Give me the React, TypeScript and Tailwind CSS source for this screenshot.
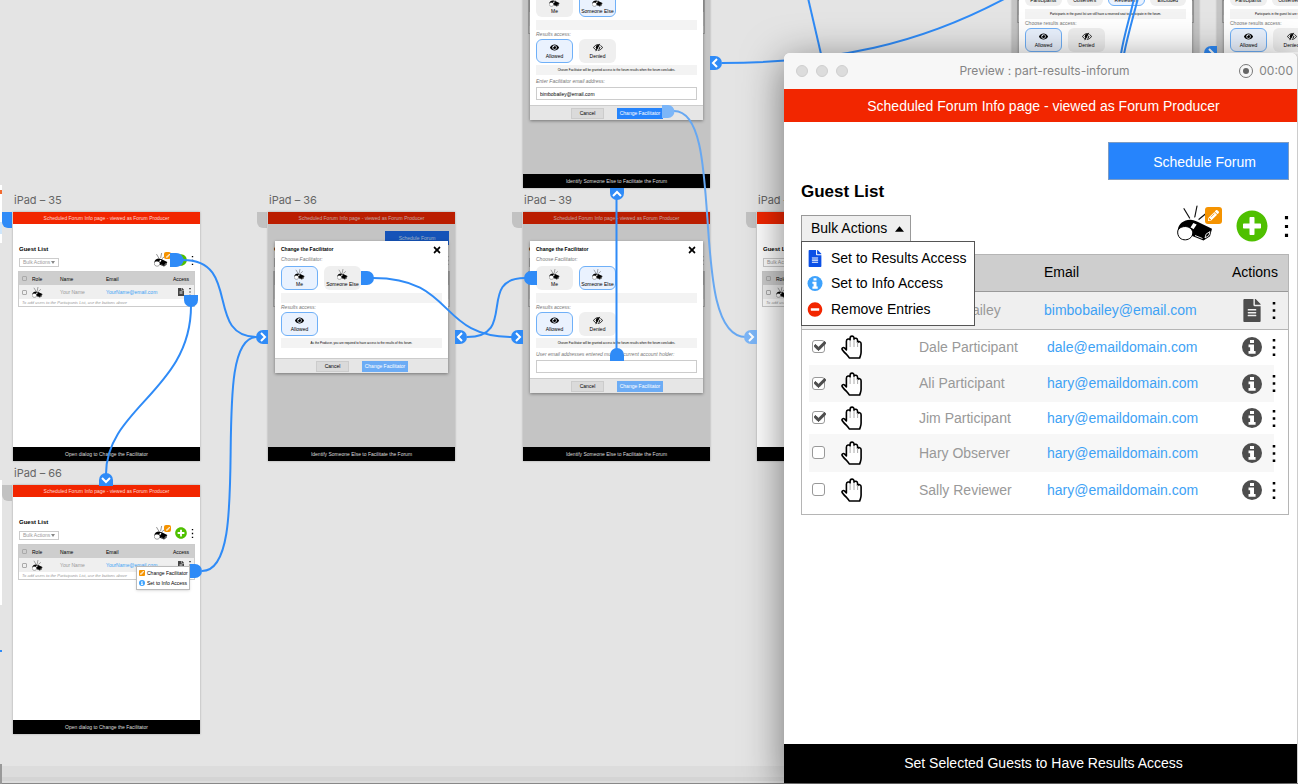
import React, { useState } from "react";
import {
  FaCheck,
  FaEye,
  FaFileAlt,
  FaMinusCircle,
  FaPencilAlt,
  FaPlusCircle,
  FaTimes,
} from "react-icons/fa";

/* ---------- Icons ---------- */

function Whistle({ className }: { className: string }) {
  return (
    <svg viewBox="0 0 37 37" className={className} fill="none" aria-hidden="true">
      <path
        d="M7 3.700 12.600 13M20 1l-2.200 11M28.700 8.700 22 14.300"
        stroke="#111"
        strokeWidth="1.200"
        strokeLinecap="round"
      />
      <path d="M.8 25C1.500 18.500 8 14 15 15c2 .3 4 1.200 5.500 1.800L35 23.800l-2 7.400L26.500 35.500 14 30.500Z" fill="#000" />
      <path
        d="M1 25c2-3.500 8.500-4.800 12.300-1.800 3 2.400 3.200 6.500.6 9.200-2.800 3-8 3.200-10.800.7C.8 31 .2 27.600 1 25Z"
        fill="#fff"
        stroke="#000"
        strokeWidth="1"
      />
      <path d="m16.300 18 3.400 1.400-3.200 4.800c-.8-.8-1.900-1.400-3-1.800Z" fill="#fff" />
      <path d="m18 30.500 7.500 3M28 33l4-2.600.9-3.800-3.900 2.600Z" stroke="#fff" strokeWidth=".9" />
    </svg>
  );
}

function Hand() {
  return (
    <svg viewBox="0 0 22 24" className="h-6 w-[22px]" fill="none" aria-hidden="true">
      <path
        d="M5.400 15V6.200c0-2.500 2.900-2.800 3.700-1.200V3.200c0-2.700 3.900-2.700 3.900-.2v1.200c.8-1.600 3.600-1.300 3.600 1.200v2c1-1.300 3.500-.9 3.500 1.300V17c0 3-.8 3.700-1.400 6H8.300c-.6-1.400-1.300-2.200-2.400-3.200C3.400 17.600 2.700 17 1.300 14.800c-1-1.700.9-3 2.400-1.700Z"
        fill="#fff"
        stroke="#000"
        strokeWidth="1.600"
        strokeLinejoin="round"
      />
      <path d="M9.100 5.500V12M13 5v7M16.600 7v5" stroke="#aaa" strokeWidth="1" />
    </svg>
  );
}

function Info({ className }: { className: string }) {
  return (
    <svg viewBox="0 0 19 19" className={className} aria-hidden="true">
      <circle cx="9.500" cy="9.500" r="9.500" fill="currentColor" />
      <path d="M7.600 2.800h3.800v3H7.600zM6.200 7.200h5.200v6.200h1.500V16H6.200v-2.600h1.500V9.800H6.200z" fill="#fff" />
    </svg>
  );
}

function EyeOff({ className }: { className: string }) {
  return (
    <svg viewBox="0 0 18 14" className={className} fill="none" aria-hidden="true">
      <path d="M1 7c4-6.700 12-6.700 16 0-4 6.700-12 6.700-16 0Z" stroke="#000" strokeWidth="1.600" />
      <circle cx="9" cy="6.500" r="4" fill="#000" />
      <path d="M13.500.5 6.500 14" stroke="#efefef" strokeWidth="2" />
      <path d="M12 .5 5 13.500" stroke="#000" strokeWidth="1.600" />
    </svg>
  );
}

function Dots({ className }: { className: string }) {
  return (
    <svg viewBox="0 0 4 20" className={className} aria-hidden="true">
      <path d="M.5 0h3v3h-3zM.5 8.500h3v3h-3zM.5 17h3v3h-3z" fill="#000" />
    </svg>
  );
}

/* ---------- Artboard contents ---------- */

function SmallCheckbox() {
  return (
    <input
      type="checkbox"
      aria-label="Select guest"
      className="block size-[5px] appearance-none rounded-[1px] border border-[#aaa]"
    />
  );
}

function GuestPage({ schedule }: { schedule?: boolean }) {
  return (
    <div className="flex flex-1 flex-col px-[6px]">
      <div className="flex h-[21px] items-start justify-end pt-[7px]">
        {schedule && (
          <button className="h-[14px] w-16 bg-[#1c6cf0] text-[5px] leading-3 text-[#cfe2ff]">Schedule Forum</button>
        )}
      </div>
      <div className="flex items-end justify-between">
        <div>
          <h3 className="text-[6px] leading-[9px] font-bold text-black">Guest List</h3>
          <button className="mt-[4px] flex h-[9px] w-10 items-center justify-between border border-[#ccc] px-[3px] text-[5px] text-[#999]">
            Bulk Actions
            <svg viewBox="0 0 4 3" className="h-[3px] w-1" aria-hidden="true">
              <path d="M0 0h4L2 3Z" fill="#888" />
            </svg>
          </button>
        </div>
        <div className="flex items-center gap-[4px]">
          <div className="relative w-[17px]">
            <Whistle className="size-[14px]" />
            <span className="absolute top-[-1px] right-0 grid size-[7px] place-items-center rounded-[2px] bg-[#f59300] text-white">
              <FaPencilAlt size={4} />
            </span>
          </div>
          <FaPlusCircle size={12} className="text-[#4fc000]" />
          <Dots className="h-[9px] w-[3px]" />
        </div>
      </div>
      <table className="mt-[5px] w-full table-fixed border-collapse text-left text-[5px] leading-[6px] text-black outline outline-[#ccc]">
        <colgroup>
          <col className="w-[13px]" />
          <col className="w-[28px]" />
          <col className="w-[46px]" />
          <col />
          <col className="w-[21px]" />
        </colgroup>
        <thead>
          <tr className="h-[13px] bg-[#cecece]">
            <th className="pl-[3px]"><SmallCheckbox /></th>
            <th className="font-normal">Role</th>
            <th className="font-normal">Name</th>
            <th className="font-normal">Email</th>
            <th className="font-normal">Access</th>
          </tr>
        </thead>
        <tbody>
          <tr className="h-[14px] bg-[#efefef]">
            <td className="pl-[3px]"><SmallCheckbox /></td>
            <td><Whistle className="size-[11px]" /></td>
            <td className="text-[#999]">Your Name</td>
            <td><a href="#guest" className="text-[#3ea2f5]">YourName@email.com</a></td>
            <td>
              <div className="flex items-center gap-1 pl-1">
                <FaFileAlt size={8} className="text-[#444]" />
                <Dots className="h-[8px] w-[2px]" />
              </div>
            </td>
          </tr>
          <tr className="h-[7px]">
            <td colSpan={5} className="pl-[3px] text-[4px] leading-[6px] text-[#999] italic">
              To add users to the Participants List, use the buttons above
            </td>
          </tr>
        </tbody>
      </table>
    </div>
  );
}

type Icon = "whistle" | "eye" | "off";

function Choice({ icon, label, active }: { icon: Icon; label: string; active?: boolean }) {
  return (
    <button
      className={
        active
          ? "flex h-6 w-[37px] flex-col items-center justify-center gap-[1px] rounded-[6px] border border-[#6fb0f8] bg-[#eaf2fe] text-[5px] leading-[7px] text-black"
          : "flex h-6 w-[37px] flex-col items-center justify-center gap-[1px] rounded-[6px] bg-[#efefef] text-[5px] leading-[7px] text-black"
      }
    >
      {icon === "whistle" && <Whistle className="size-[11px]" />}
      {icon === "eye" && <FaEye size={9} />}
      {icon === "off" && <EyeOff className="h-[9px] w-[10px]" />}
      <span className="whitespace-nowrap">{label}</span>
    </button>
  );
}

type DialogProps = {
  me?: boolean;
  roles?: boolean;
  note: string;
  field?: { id: string; label: string; value: string };
  ready?: boolean;
};

function Dialog({ me, roles, note, field, ready }: DialogProps) {
  return (
    <div className="absolute inset-x-[7px] top-[29px] bg-white shadow-[0_1px_3px_rgba(0,0,0,0.4)]">
      <div className="px-[6px]">
        <div className="flex h-[15px] items-center justify-between pt-[2px]">
          <h3 className="text-[5px] font-bold text-black">Change the Facilitator</h3>
          <button aria-label="Close"><FaTimes size={10} /></button>
        </div>
        <p className="mb-[3px] text-[5px] leading-[7px] text-[#777] italic">Choose Facilitator:</p>
        {roles ? (
          <div className="flex gap-[5px]">
            <Choice icon="whistle" label="Participants" />
            <Choice icon="whistle" label="Observers" />
            <Choice icon="whistle" label="Reviewers" active />
            <Choice icon="whistle" label="Excluded" />
          </div>
        ) : (
          <div className="flex gap-[6px]">
            <Choice icon="whistle" label="Me" active={me} />
            <Choice icon="whistle" label="Someone Else" active={!me} />
          </div>
        )}
        <p className="mt-[3px] h-[10px] bg-[#f3f3f3] text-center text-[3px] leading-[10px] text-black">
          {roles ? note : ""}
        </p>
        <p
          className={
            roles
              ? "mt-[1px] mb-[1px] text-[5px] leading-[7px] text-[#777]"
              : "mt-[1px] mb-[1px] text-[5px] leading-[7px] text-[#777] italic"
          }
        >
          {roles ? "Choose results access:" : "Results access:"}
        </p>
        <div className="flex gap-[6px]">
          <Choice icon="eye" label="Allowed" active />
          {!me && <Choice icon="off" label="Denied" />}
        </div>
        <p className="mt-[2px] h-[10px] bg-[#f3f3f3] text-center text-[3px] leading-[10px] text-black">
          {roles ? "" : note}
        </p>
        {field ? (
          <div className="mt-[3px] pb-[5px]">
            <label htmlFor={field.id} className="block text-[5px] leading-[7px] whitespace-nowrap text-[#777] italic">
              {field.label}
            </label>
            <input
              id={field.id}
              type="email"
              defaultValue={field.value}
              className="mt-[2px] block h-[13px] w-full border border-[#ccc] px-[3px] text-[5px] text-black"
            />
          </div>
        ) : (
          <div className="h-[10px]" />
        )}
      </div>
      <div className="flex h-[15px] items-center gap-[13px] border-t border-[#ccc] bg-[#e6e6e6] pl-[41px]">
        <button className="h-[11px] w-[33px] border border-[#ccc] bg-[#dadada] text-[5px] leading-[9px] text-black">
          Cancel
        </button>
        <button
          className={
            ready
              ? "h-[11px] w-[46px] bg-[#2684fc] text-[5px] leading-[11px] text-white"
              : "h-[11px] w-[46px] bg-[#6cacf5] text-[5px] leading-[11px] text-white"
          }
        >
          Change Facilitator
        </button>
      </div>
    </div>
  );
}

function Artboard({
  place,
  name,
  caption,
  schedule,
  tab,
  dialog,
  children,
}: {
  place: string;
  name?: string;
  caption: string;
  schedule?: boolean;
  tab?: string;
  dialog?: DialogProps;
  children?: React.ReactNode;
}) {
  return (
    <section className={`absolute ${place}`}>
      {name && (
        <h2 className="absolute top-[-20px] left-[1px] font-[Inter,sans-serif] text-[11px] leading-4 whitespace-nowrap text-[#666]">
          {name}
        </h2>
      )}
      {tab && <span className={`absolute top-0 left-[-11px] h-4 w-[10px] rounded-bl-[6px] ${tab}`} />}
      <div className="relative flex h-[249px] w-[187px] flex-col bg-white shadow-[0_0_2px_rgba(0,0,0,0.3)]">
        <header className="h-3 bg-[#f22600] text-center text-[5px] leading-[13px] text-[#ffd9d0]">
          Scheduled Forum Info page - viewed as Forum Producer
        </header>
        <GuestPage schedule={schedule} />
        <footer className="h-[14px] bg-black text-center text-[5px] leading-[14px] text-[#ddd]">{caption}</footer>
        {dialog && <div className="absolute inset-x-0 top-0 bottom-[14px] bg-black/23" />}
        {dialog && <Dialog {...dialog} />}
        {children}
      </div>
    </section>
  );
}

/* ---------- Connectors ---------- */

function Connectors() {
  return (
    <svg viewBox="0 0 1298 784" className="absolute top-0 left-0 h-[784px] w-[1298px]" fill="none" aria-hidden="true">
      <g stroke="#2f8bf7" strokeWidth="2">
        <path d="M183 260C242 260 204 337 257 337" />
        <path d="M191 306C191 390 106 408 106 474" />
        <path d="M202 571C256 571 206 337 257 337" />
        <path d="M373 278C456 278 437 337 512 337" />
        <path d="M467 337C518 337 476 278 525 278" />
        <path d="M616.500 199V349" />
        <path d="M722 63C835 63 920 44 1006-2" />
        <path d="M808-2 821 54" />
        <path d="M1134-2C1131 14 1124 34 1121 54M1138-2C1134 14 1128 34 1124 54" />
      </g>
      <path d="M674 111C728 111 686 337 746 337" stroke="#67a8f2" strokeWidth="2" />
      <g fill="#2f8bf7">
        <path d="M170 253h6c5 0 7 4 8 7-1 3-3 7-8 7h-6Z" />
        <path d="M184 295h14v5a7 7 0 0 1-14 0Z" />
        <path d="M190 564h5a7 7 0 0 1 0 14h-5Z" />
        <path d="M99 486v-6a7 7 0 0 1 14 0v6Z" />
        <path d="M268 330h-5a7 7 0 0 0 0 14h5Z" />
        <path d="M361 271h6a7 7 0 0 1 0 14h-6Z" />
        <path d="M455 330h5a7 7 0 0 1 0 14h-5Z" />
        <path d="M523 330h-5a7 7 0 0 0 0 14h5Z" />
        <path d="M537 271h-6a7 7 0 0 0 0 14h6Z" />
        <path d="M610 361v-6a7 7 0 0 1 14 0v6Z" />
        <path d="M610 188v5a7 7 0 0 0 14 0v-5Z" />
        <path d="M710 56h5a7 7 0 0 1 0 14h-5Z" />
        <path d="M1217 46h-6a7 7 0 0 0 0 14h6Z" />
      </g>
      <g fill="#7cb6f8">
        <path d="M662 105h6a6.500 6.500 0 0 1 0 13h-6Z" />
        <path d="M757 330h-6a7 7 0 0 0 0 14h6Z" />
      </g>
      <g stroke="#fff" strokeWidth="2">
        <path d="m261 333 4 4-4 4M516 333l4 4-4 4M462 333l-4 4 4 4M749 333l4 4-4 4M717 59l-4 4 4 4M1209 49l4 4-4 4" />
        <path d="m102 478 4 4 4-4M613 196l4-4 4 4" />
      </g>
    </svg>
  );
}

/* ---------- Preview window ---------- */

type Guest = { name: string; email: string; selected: boolean; height: string };

const guests: Guest[] = [
  { name: "Dale Participant", email: "dale@emaildomain.com", selected: true, height: "h-9" },
  { name: "Ali Participant", email: "hary@emaildomain.com", selected: true, height: "h-[37px]" },
  { name: "Jim Participant", email: "hary@emaildomain.com", selected: true, height: "h-8" },
  { name: "Hary Observer", email: "hary@emaildomain.com", selected: false, height: "h-[38px]" },
  { name: "Sally Reviewer", email: "hary@emaildomain.com", selected: false, height: "h-9" },
];

const stripe =
  "bg-[linear-gradient(to_right,transparent_7px,#f7f7f7_7px,#f7f7f7_calc(100%-14px),transparent_calc(100%-14px))]";

function Preview() {
  const [open, setOpen] = useState(true);
  return (
    <main className="absolute top-[53px] right-0 bottom-[1px] left-[784px] flex min-w-[500px] flex-col rounded-t-[6px] border-r border-[#ccc] bg-white shadow-[0_8px_40px_rgba(0,0,0,0.5)]">
      <div className="flex h-9 shrink-0 items-center rounded-t-[6px] bg-[#f7f7f7] pr-1 pl-3 font-[Inter,sans-serif] text-[12px] text-[#858585]">
        <div className="flex w-[92px] gap-2">
          <button aria-label="Close window" className="size-3 rounded-full border border-[#cfcfcf] bg-[#dcdcdc]" />
          <button aria-label="Minimise window" className="size-3 rounded-full border border-[#cfcfcf] bg-[#dcdcdc]" />
          <button aria-label="Zoom window" className="size-3 rounded-full border border-[#cfcfcf] bg-[#dcdcdc]" />
        </div>
        <h1 className="flex-1 text-center">Preview : part-results-inforum</h1>
        <div className="flex w-[92px] items-center justify-end gap-[6px]">
          <button aria-label="Record" className="grid size-[14px] place-items-center rounded-full border border-[#777]">
            <span className="size-[6px] rounded-full bg-[#666]" />
          </button>
          <span>00:00</span>
        </div>
      </div>
      <header className="h-[33px] shrink-0 bg-[#f22600] pl-[6px] text-center text-[14px] leading-[34px] text-white">
        Scheduled Forum Info page - viewed as Forum Producer
      </header>
      <div className="flex flex-1 flex-col pt-5 pr-2 pl-[17px]">
        <button className="h-[38px] w-[181px] self-end border border-[#7d9cc4] bg-[#2684fc] pt-[2px] pl-3 text-[14px] text-white">
          Schedule Forum
        </button>
        <h2 className="h-6 text-[17px] leading-6 font-bold text-black">Guest List</h2>
        <div className="flex h-[38px] items-end justify-between">
          <div className="relative">
            <button
              aria-expanded={open}
              onClick={() => setOpen(!open)}
              className="flex h-[27px] w-[110px] items-center justify-between border border-[#999] bg-[#efefef] pr-[6px] pl-[9px] text-[14px] text-black"
            >
              Bulk Actions
              <svg viewBox="0 0 10 6" className="h-[6px] w-[9px]" aria-hidden="true">
                <path d="M0 6 5 0l5 6Z" fill="#000" />
              </svg>
            </button>
            {open && (
              <ul className="absolute top-[26px] left-0 z-10 w-[174px] border border-[#555] bg-white py-[3px] text-[14px] text-black">
                <li>
                  <button className="flex h-[26px] w-full items-center gap-2 pl-[5px] whitespace-nowrap">
                    <FaFileAlt size={17} className="w-4 text-[#0b50e6]" />
                    Set to Results Access
                  </button>
                </li>
                <li>
                  <button className="flex h-[25px] w-full items-center gap-2 pl-[5px]">
                    <Info className="size-[15px] w-4 text-[#3ea2fc]" />
                    Set to Info Access
                  </button>
                </li>
                <li>
                  <button className="flex h-[26px] w-full items-center gap-2 pl-[5px]">
                    <FaMinusCircle size={15} className="w-4 text-[#f22600]" />
                    Remove Entries
                  </button>
                </li>
              </ul>
            )}
          </div>
          <div className="flex items-start">
            <button aria-label="Change facilitator" className="relative mr-[14px] h-[38px] w-[45px]">
              <Whistle className="size-[37px]" />
              <span className="absolute top-[3px] right-0 grid size-[17px] place-items-center rounded-[3px] bg-[#f59300] text-white">
                <FaPencilAlt size={11} />
              </span>
            </button>
            <button aria-label="Add guest" className="mt-[6px] mr-4 text-[#4fc000]">
              <FaPlusCircle size={32} />
            </button>
            <button aria-label="More" className="mt-3">
              <Dots className="h-[21px] w-[5px]" />
            </button>
          </div>
        </div>
        <div className="mt-3 border border-[#b5b5b5] pb-[6px]">
          <table className="w-full table-fixed border-collapse text-left text-[14px] text-black">
            <colgroup>
              <col className="w-[39px]" />
              <col className="w-[78px]" />
              <col className="w-[125px]" />
              <col />
              <col className="w-[56px]" />
            </colgroup>
            <thead>
              <tr className="h-9 border-b border-[#999] bg-[#cecece]">
                <th />
                <th className="font-normal">Role</th>
                <th className="font-normal">Name</th>
                <th className="font-normal">Email</th>
                <th className="font-normal">Actions</th>
              </tr>
            </thead>
            <tbody>
              <tr className="h-[38px] border-b border-[#b5b5b5] bg-[#efefef]">
                <td />
                <td />
                <td className="text-[#999]">Bimbo Bailey</td>
                <td><a href="#bimbo" className="text-[#3ea2f5]">bimbobailey@email.com</a></td>
                <td>
                  <div className="flex items-center gap-[10px] pl-[10px]">
                    <FaFileAlt size={23} className="w-5 text-[#4d4d4d]" />
                    <button aria-label="Guest actions"><Dots className="h-[17px] w-1" /></button>
                  </div>
                </td>
              </tr>
              {guests.map((g, i) => (
                <tr key={g.name} className={`${g.height} ${i % 2 ? stripe : ""}`}>
                  <td className="pl-[10px]">
                    <label className="relative block size-[14px]">
                      <input
                        type="checkbox"
                        defaultChecked={g.selected}
                        aria-label={`Select ${g.name}`}
                        className="peer block size-[13px] appearance-none rounded-[3px] border border-[#999] bg-white"
                      />
                      <FaCheck
                        size={12}
                        stroke="currentColor"
                        strokeWidth={40}
                        className="pointer-events-none absolute top-0 left-[2px] hidden text-[#4d4d4d] peer-checked:block"
                      />
                    </label>
                  </td>
                  <td><Hand /></td>
                  <td className="whitespace-nowrap text-[#999]">{g.name}</td>
                  <td className="pl-[3px]"><a href="#guest" className="text-[#3ea2f5]">{g.email}</a></td>
                  <td>
                    <div className="flex items-center gap-[10px] pl-[10px]">
                      <Info className="h-5 w-5 text-[#4d4d4d]" />
                      <button aria-label="Guest actions"><Dots className="h-[17px] w-1" /></button>
                    </div>
                  </td>
                </tr>
              ))}
            </tbody>
          </table>
        </div>
      </div>
      <footer className="h-[39px] shrink-0 bg-black pl-[6px] text-center text-[14px] leading-[38px] text-white">
        Set Selected Guests to Have Results Access
      </footer>
    </main>
  );
}

/* ---------- Page ---------- */

const granted = "Chosen Facilitator will be granted access to the forum results when the forum concludes.";
const reserved = "Participants in the guest list are still have a reserved seat to participate in the forum.";

export default function App() {
  return (
    <div className="relative h-screen overflow-hidden bg-[#e4e4e4] font-['Liberation_Sans',Arial,sans-serif]">
      <div className="absolute inset-x-0 bottom-0 h-[18px] border-b border-[#888] bg-[#dcdcdc]">
        <div className="mt-[11px] h-[4px] bg-[#d4d4d4]" />
      </div>
      <div className="absolute top-[185px] left-0 h-[58px] w-[2px] bg-white pt-[5px]">
        <div className="h-1 bg-[#f26a30]" />
        <div className="mt-7 h-3 bg-[#cfe6fb]" />
      </div>
      <div className="absolute top-[480px] left-0 h-[125px] w-[2px] bg-white" />
      <div className="absolute top-[650px] left-0 h-[2px] w-[2px] bg-[#2f8bf7]" />
      <div className="absolute bottom-0 left-0 h-[20px] w-[2px] bg-[#999]" />

      <Artboard place="top-[212px] left-[13px]" name="iPad – 35" tab="bg-[#2f8bf7]" caption="Open dialog to Change the Facilitator" />
      <Artboard place="top-[485px] left-[13px]" name="iPad – 66" tab="bg-[#c2c2c2]" caption="Open dialog to Change the Facilitator">
        <ul className="absolute top-[81px] left-[123px] w-[54px] border border-[#bbb] bg-white py-[1px] text-[5px] leading-[10px] whitespace-nowrap text-black shadow">
          <li className="flex items-center gap-[2px] pl-[2px]">
            <span className="grid size-[6px] place-items-center rounded-[1px] bg-[#f59300] text-white">
              <FaPencilAlt size={4} />
            </span>
            Change Facilitator
          </li>
          <li className="flex items-center gap-[2px] pl-[2px]">
            <Info className="size-[6px] text-[#3ea2fc]" />
            Set to Info Access
          </li>
        </ul>
      </Artboard>
      <Artboard
        place="top-[212px] left-[268px]"
        name="iPad – 36"
        tab="bg-[#c2c2c2]"
        schedule
        caption="Identify Someone Else to Facilitate the Forum"
        dialog={{
          me: true,
          note: "As the Producer, you are required to have access to the results of this forum.",
        }}
      />
      <Artboard
        place="top-[212px] left-[523px]"
        name="iPad – 39"
        tab="bg-[#c2c2c2]"
        caption="Identify Someone Else to Facilitate the Forum"
        dialog={{
          note: granted,
          field: { id: "mail-39", label: "User email addresses entered must be current account holder:", value: "" },
        }}
      />
      <Artboard
        place="top-[-61px] left-[523px]"
        caption="Identify Someone Else to Facilitate the Forum"
        dialog={{
          note: granted,
          ready: true,
          field: { id: "mail-top", label: "Enter Facilitator email address:", value: "bimbobailey@email.com" },
        }}
      />
      <Artboard place="top-[212px] left-[757px]" name="iPad – 40" tab="bg-[#c2c2c2]" caption="Open dialog to Change the Facilitator" />
      <Artboard
        place="top-[-72px] left-[1012px]"
        caption="Choose Results Access"
        dialog={{ roles: true, note: reserved }}
      />
      <Artboard
        place="top-[-72px] left-[1217px]"
        caption="Choose Results Access"
        dialog={{ roles: true, note: reserved }}
      />

      <Connectors />
      <Preview />
    </div>
  );
}
